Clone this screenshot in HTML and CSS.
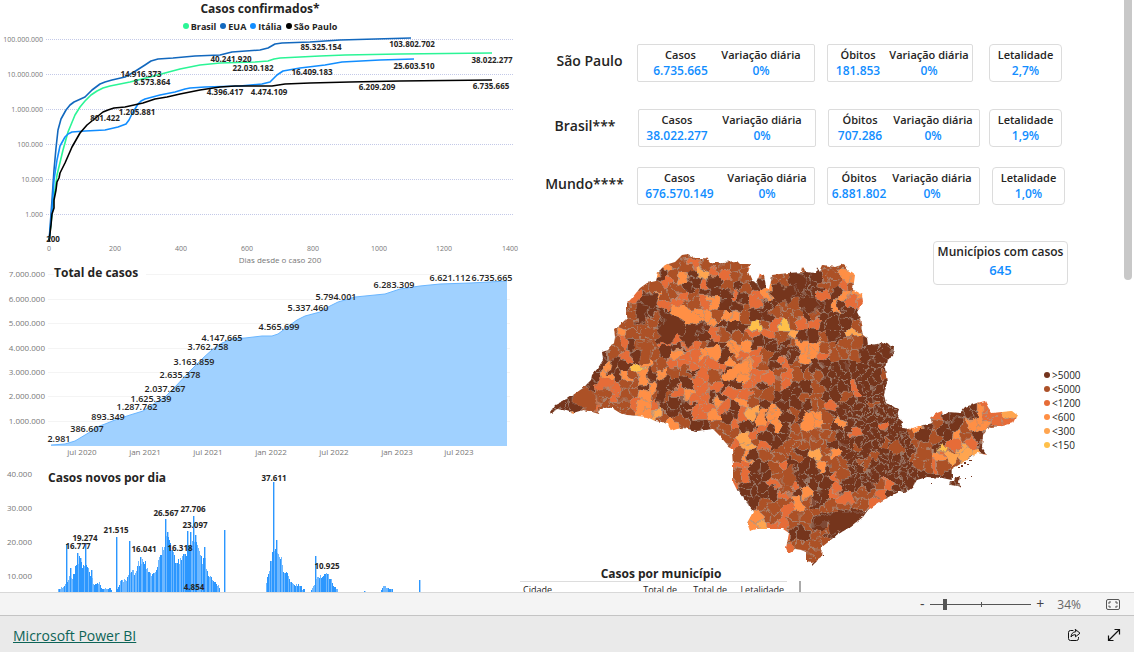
FILE: index.html
```html
<!DOCTYPE html>
<html lang="pt-BR">
<head>
<meta charset="utf-8">
<title>Casos confirmados</title>
<link rel="stylesheet" href="styles.css">
</head>
<body>
<main class="report">
  <div class="charts">
    <section class="panel">
      <h2 class="panel-title">Casos confirmados*</h2>
      <ul class="series-legend">
        <li><span class="dot dot-brasil"></span>Brasil</li>
        <li><span class="dot dot-eua"></span>EUA</li>
        <li><span class="dot dot-italia"></span>Itália</li>
        <li><span class="dot dot-sp"></span>São Paulo</li>
      </ul>
      <svg class="chart" viewBox="0 34 520 232" role="img" aria-label="Casos confirmados por dias desde o caso 200">
        <path class="grid-dotted" d="M46 39.5H513M46 74.5H513M46 109.5H513M46 144.5H513M46 179.5H513M46 214.5H513"/>
        <g class="axis axis-small end">
          <text x="43" y="42">100.000.000</text><text x="43" y="77">10.000.000</text><text x="43" y="112">1.000.000</text>
          <text x="43" y="147">100.000</text><text x="43" y="182">10.000</text><text x="43" y="217">1.000</text>
        </g>
        <g class="axis axis-small mid">
          <text x="49" y="251">0</text><text x="115" y="251">200</text><text x="181" y="251">400</text><text x="247" y="251">600</text>
          <text x="313" y="251">800</text><text x="379" y="251">1000</text><text x="444" y="251">1200</text><text x="510" y="251">1400</text>
        </g>
        <text class="axis mid" x="280" y="263">Dias desde o caso 200</text>
        <polyline class="line line-brasil" points="49,242 53,205 57,175 63,150 68,132 75,115 80,107 85,101 91,95 97,91 103,88 110,86 130,82 150,77 165,73 180,69 200,65 220,63 255,62 268,61 274,59 280,58 300,57 320,56 345,55 400,54 492,53"/>
        <polyline class="line line-eua" points="49,242 52,200 54,170 56,148 58,130 61,119 66,110 70,105 74,102 85,97 92,90 96,87 100,84 105,82 112,80 125,77 134,72 145,65 151,61 158,59 173,58 195,56 220,55 232,52 260,50 268,48 275,44 282,43 310,42 340,40 411,38"/>
        <polyline class="line line-italia" points="49,242 52,210 54,180 57,160 60,146 65,137 68,134 72,132 85,131 105,130 118,127 126,124 129,120 132,114 138,104 141,101 145,99 160,95 175,92 185,89 190,88 205,87 240,86 262,84 270,82 274,78 277,75 283,71 300,68 325,65 342,62 380,60 414,59"/>
        <polyline class="line line-sp" points="49,242 51,225 52,214 54,208 54,200 56,190 57,182 59,178 60,173 65,163 72,147 80,133 87,125 98,116 103,112 108,110 114,108 125,107 143,103 155,99 167,97 180,94 200,90 220,87 235,86 272,86 285,84 310,83 350,82 400,81 492,80"/>
        <g class="value value-small mid">
          <text x="53" y="242">200</text><text x="105" y="121">801.422</text><text x="137" y="115">1.205.881</text>
          <text x="141" y="77">14.916.373</text><text x="152" y="85">8.573.864</text><text x="231" y="62">40.241.920</text>
          <text x="253" y="71">22.030.182</text><text x="225" y="95">4.396.417</text><text x="269" y="95">4.474.109</text>
          <text x="321" y="50">85.325.154</text><text x="312" y="75">16.409.183</text><text x="412" y="47">103.802.702</text>
          <text x="414" y="69">25.603.510</text><text x="377" y="90">6.209.209</text><text x="492" y="63">38.022.277</text>
          <text x="491" y="89">6.735.665</text>
        </g>
      </svg>
    </section>

    <section class="panel">
      <h2 class="panel-title over-total">Total de casos</h2>
      <svg class="chart" viewBox="0 266 520 196" role="img" aria-label="Total de casos acumulados">
        <path class="grid-faint" d="M48 274.5H510M48 299.5H510M48 323.5H510M48 348.5H510M48 372.5H510M48 396.5H510M48 421.5H510"/>
        <path class="area" d="M51 445L65 444L75 441L90 432L97 427L105 424L115 420L130 415L143 411L155 403L165 397L175 387L190 371L203 358L213 349L222 343L232 339L245 338L262 336L272 336L278 334L290 325L297 320L305 316L320 312L330 306L338 302L345 300L355 297L385 294L400 289L420 286L440 284L470 283L507 281V446H51Z"/>
        <polyline class="area-line" points="51,445 65,444 75,441 90,432 97,427 105,424 115,420 130,415 143,411 155,403 165,397 175,387 190,371 203,358 213,349 222,343 232,339 245,338 262,336 272,336 278,334 290,325 297,320 305,316 320,312 330,306 338,302 345,300 355,297 385,294 400,289 420,286 440,284 470,283 507,281"/>
        <g class="axis end">
          <text x="45" y="277">7.000.000</text><text x="45" y="302">6.000.000</text><text x="45" y="326">5.000.000</text><text x="45" y="351">4.000.000</text>
          <text x="45" y="375">3.000.000</text><text x="45" y="399">2.000.000</text><text x="45" y="424">1.000.000</text>
        </g>
        <g class="axis mid">
          <text x="82" y="455">jul 2020</text><text x="145" y="455">jan 2021</text><text x="208" y="455">jul 2021</text><text x="271" y="455">jan 2022</text>
          <text x="334" y="455">jul 2022</text><text x="397" y="455">jan 2023</text><text x="459" y="455">jul 2023</text>
        </g>
        <g class="value value-total mid">
          <text x="59" y="442">2.981</text><text x="87" y="432">386.607</text><text x="108" y="420">893.349</text><text x="137" y="410">1.287.762</text>
          <text x="151" y="402">1.625.339</text><text x="165" y="392">2.037.267</text><text x="180" y="378">2.635.378</text><text x="194" y="365">3.163.859</text>
          <text x="208" y="350">3.762.758</text><text x="222" y="341">4.147.665</text><text x="279" y="330">4.565.699</text><text x="308" y="311">5.337.460</text>
          <text x="336" y="300">5.794.001</text><text x="394" y="288">6.283.309</text><text x="450" y="281">6.621.112</text><text x="492" y="281">6.735.665</text>
        </g>
      </svg>
    </section>

    <section class="panel">
      <h2 class="panel-title over-new">Casos novos por dia</h2>
      <svg class="chart" viewBox="0 462 520 150" role="img" aria-label="Casos novos por dia">
        <g class="axis end">
          <text x="32" y="477">40.000</text><text x="32" y="511">30.000</text><text x="32" y="545">20.000</text><text x="32" y="579">10.000</text>
        </g>
        <path id="bars-soft" class="bars-soft"/>
        <path id="bars" class="bars"/>
        <g class="value value-small mid">
          <text x="78" y="549">16.777</text><text x="85" y="541">19.274</text><text x="116" y="533">21.515</text><text x="144" y="552">16.041</text>
          <text x="166" y="516">26.567</text><text x="193" y="512">27.706</text><text x="195" y="528">23.097</text><text x="180" y="551">16.318</text>
          <text x="194" y="590">4.854</text><text x="274" y="481">37.611</text><text x="327" y="569">10.925</text>
        </g>
      </svg>
    </section>
  </div>

  <div class="summary">
    <section class="kpis">
      <div class="kpi-row row-sp">
        <h2 class="kpi-place">São Paulo</h2>
        <dl class="kpi-box">
          <div><dt>Casos</dt><dd>6.735.665</dd></div>
          <div><dt>Variação diária</dt><dd>0%</dd></div>
        </dl>
        <dl class="kpi-box kpi-deaths">
          <div><dt>Óbitos</dt><dd>181.853</dd></div>
          <div><dt>Variação diária</dt><dd>0%</dd></div>
        </dl>
        <dl class="kpi-box kpi-single"><div><dt>Letalidade</dt><dd>2,7%</dd></div></dl>
      </div>
      <div class="kpi-row row-brasil">
        <h2 class="kpi-place">Brasil***</h2>
        <dl class="kpi-box">
          <div><dt>Casos</dt><dd>38.022.277</dd></div>
          <div><dt>Variação diária</dt><dd>0%</dd></div>
        </dl>
        <dl class="kpi-box kpi-deaths">
          <div><dt>Óbitos</dt><dd>707.286</dd></div>
          <div><dt>Variação diária</dt><dd>0%</dd></div>
        </dl>
        <dl class="kpi-box kpi-single"><div><dt>Letalidade</dt><dd>1,9%</dd></div></dl>
      </div>
      <div class="kpi-row row-mundo">
        <h2 class="kpi-place">Mundo****</h2>
        <dl class="kpi-box">
          <div><dt>Casos</dt><dd>676.570.149</dd></div>
          <div><dt>Variação diária</dt><dd>0%</dd></div>
        </dl>
        <dl class="kpi-box kpi-deaths">
          <div><dt>Óbitos</dt><dd>6.881.802</dd></div>
          <div><dt>Variação diária</dt><dd>0%</dd></div>
        </dl>
        <dl class="kpi-box kpi-single"><div><dt>Letalidade</dt><dd>1,0%</dd></div></dl>
      </div>
    </section>

    <section class="map-area">
      <svg class="map" viewBox="520 205 520 361" role="img" aria-label="Mapa de casos por município do estado de São Paulo">
        <defs>
          <clipPath id="state">
            <path d="M550 412L555 405L563 401L573 395L583 388L591 380L592 375L598 368L603 360L602 352L608 350L614 343L615 337L614 329L620 325L627 318L627 303L632 298L640 288L647 283L656 281L658 272L665 265L675 262L682 255L688 254L695 258L707 258L710 262L723 262L737 261L740 264L751 264L748 272L752 281L757 282L760 273L764 275L766 288L769 289L772 275L788 273L802 272L803 267L806 272L816 273L817 267L820 272L823 265L835 267L844 264L848 270L855 275L853 290L862 295L863 303L857 312L860 318L863 335L867 338L868 345L877 344L882 342L888 344L894 347L893 357L887 360L885 368L887 383L884 395L886 403L899 409L897 417L903 422L902 428L913 429L924 425L933 423L931 417L937 413L942 411L943 415L948 412L960 413L965 407L977 403L985 401L988 407L992 413L1002 412L1012 411L1017 415L1013 423L1003 426L990 427L983 435L982 447L987 455L977 453L970 458L962 463L952 469L952 480L942 478L927 477L917 480L912 488L905 493L900 491L892 495L880 502L868 510L863 517L850 527L837 535L822 547L821 557L812 563L807 562L807 552L802 550L795 549L788 553L786 548L789 533L783 529L770 529L757 529L750 531L747 523L753 512L747 503L737 490L733 482L733 467L732 450L725 442L720 436L713 429L697 431L683 428L677 429L671 431L668 423L655 421L647 417L637 416L627 415L620 413L612 408L600 408L599 414L592 412L583 410L573 413L563 410L557 409L551 414Z"/>
            <path d="M955 476L960 477L959 481L961 488L957 486L949 485L950 482L954 482Z"/>
          </clipPath>
          <filter id="organic" x="0" y="0" width="1" height="1">
            <feTurbulence type="fractalNoise" baseFrequency="0.09" numOctaves="2" seed="4"/>
            <feDisplacementMap in="SourceGraphic" scale="13" xChannelSelector="R" yChannelSelector="G"/>
          </filter>
          <filter id="coast" x="0" y="0" width="1" height="1">
            <feTurbulence type="fractalNoise" baseFrequency="0.2" numOctaves="1" seed="9"/>
            <feDisplacementMap in="SourceGraphic" scale="4" xChannelSelector="R" yChannelSelector="G"/>
          </filter>
        </defs>
        <g filter="url(#coast)">
          <g clip-path="url(#state)">
            <g id="cells" class="cells" filter="url(#organic)"></g>
          </g>
        </g>
        <path class="islets" d="M964 462h2v2h-2zM967 464h2v1h-2zM969 460h3v1h-3zM965 478h1v1h-1zM971 476h1v1h-1zM931 483h1v1h-1zM958 467h2v1h-2zM961 465h2v2h-2zM823 555h1v1h-1zM812 564l4 -3v1l-4 4z"/>
      </svg>
      <ul class="map-legend">
        <li><span class="dot dot-c5"></span>&gt;5000</li>
        <li><span class="dot dot-c4"></span>&lt;5000</li>
        <li><span class="dot dot-c3"></span>&lt;1200</li>
        <li><span class="dot dot-c2"></span>&lt;600</li>
        <li><span class="dot dot-c1"></span>&lt;300</li>
        <li><span class="dot dot-c0"></span>&lt;150</li>
      </ul>
      <dl class="city-count"><dt>Municípios com casos</dt><dd>645</dd></dl>
    </section>

    <section class="city-table">
      <h2 class="panel-title city-title">Casos por município</h2>
      <div class="table-wrap">
        <table>
          <thead><tr><th class="col-city">Cidade</th><th class="col-total">Total de</th><th class="col-total">Total de</th><th>Letalidade</th></tr></thead>
        </table>
        <span class="table-thumb"></span>
      </div>
    </section>
  </div>
  <div class="scroll-track"><span class="scroll-thumb"></span></div>
</main>

<div class="zoom-bar">
  <button class="zoom-step" type="button" aria-label="Diminuir zoom">-</button>
  <input class="zoom-range" type="range" min="0" max="100" value="13" aria-label="Zoom">
  <button class="zoom-step" type="button" aria-label="Aumentar zoom">+</button>
  <span class="zoom-value">34%</span>
  <button class="icon-button" type="button" aria-label="Ajustar à página">
    <svg width="14" height="11" viewBox="0 0 14 11" fill="none" stroke="#555"><rect x=".5" y=".5" width="13" height="10" rx="1.5"/><path d="M3 5V3h2M9 3h2v2M11 6.500v1.500H9M5 8H3V6.500"/></svg>
  </button>
</div>

<footer class="footer">
  <a class="brand" href="#">Microsoft Power BI</a>
  <button class="icon-button" type="button" aria-label="Compartilhar">
    <svg width="14" height="14" viewBox="0 0 14 14" fill="none" stroke="#111" stroke-linejoin="round" stroke-linecap="round"><path d="M6 2.500H3.500a2 2 0 0 0-2 2v6a2 2 0 0 0 2 2h6a2 2 0 0 0 2-2V9.500"/><path d="M8.500 1.500L13 5.200L8.500 8.800V6.700C6.500 6.700 5.200 7.300 4 9C4.300 6 5.500 4 8.500 3.700Z"/></svg>
  </button>
  <button class="icon-button" type="button" aria-label="Tela inteira">
    <svg width="14" height="14" viewBox="0 0 14 14" fill="none" stroke="#111" stroke-width="1.200"><path d="M1.500 12.500L12.500 1.500M7.500 1.500h5v5M1.500 7.500v5h5"/></svg>
  </button>
</footer>
<script src="charts.js"></script>
</body>
</html>
```
FILE: styles.css
```css
* { box-sizing: border-box; }

body {
  margin: 0;
  height: 100vh;
  display: flex;
  flex-direction: column;
  background: #fff;
  color: #252423;
  font-family: "Open Sans", "Noto Sans", sans-serif;
}

h2, dl, dd, ul { margin: 0; padding: 0; }
ul { list-style: none; }

button {
  padding: 0;
  border: 0;
  background: none;
  color: inherit;
  font: inherit;
}

.report {
  flex: 1;
  min-height: 0;
  overflow: hidden;
  display: grid;
  grid-template-columns: 520fr 604fr 10px;
  align-items: start;
}

.panel { position: relative; }

.panel-title {
  font-size: 12px;
  line-height: 18px;
  font-weight: 700;
  text-align: center;
}

.over-total, .over-new {
  position: absolute;
  background: #fff;
}

.over-total { left: 54px; top: -2px; padding-right: 8px; }
.over-new { left: 48px; top: 7px; }

.series-legend {
  display: flex;
  justify-content: center;
  gap: 4px;
  height: 16px;
  font-size: 9px;
  line-height: 17px;
  font-weight: 700;
}

.series-legend li, .map-legend li { display: flex; align-items: center; gap: 2px; }

.dot { width: 6px; height: 6px; border-radius: 50%; }
.dot-brasil { background: #2bf596; }
.dot-eua { background: #1268be; }
.dot-italia { background: #118dff; }
.dot-sp { background: #000; }
.dot-c5 { background: #74341d; }
.dot-c4 { background: #ac5128; }
.dot-c3 { background: #e66c37; }
.dot-c2 { background: #ff8f44; }
.dot-c1 { background: #ffa550; }
.dot-c0 { background: #ffc04a; }

.chart { display: block; width: 100%; }

.axis { font-size: 8px; fill: #777; }
.axis-small { font-size: 7px; }
.end { text-anchor: end; }
.mid { text-anchor: middle; }

.value { fill: #252423; font-weight: 600; }
.value-small { font-size: 8px; font-weight: 700; }
.value-total { font-size: 9px; }

.grid-dotted { stroke: #c3c9e8; stroke-dasharray: 1 1; fill: none; }
.grid-faint { stroke: #f4f4f4; fill: none; }

.line { fill: none; stroke-width: 1.6; stroke-linejoin: round; }
.line-brasil { stroke: #2bf596; }
.line-eua { stroke: #1268be; }
.line-italia { stroke: #118dff; }
.line-sp { stroke: #000; }

.area { fill: #a0d1ff; }
.area-line { fill: none; stroke: #6ab6ff; }
.bars { fill: #2c97ff; }
.bars-soft { fill: #6fb8ff; }

.kpis { padding-top: 44px; }

.kpi-row { display: grid; height: 38px; }
.row-sp { grid-template-columns: 117px 178px 12px 146px 16px 73px; margin-bottom: 27px; }
.row-brasil { grid-template-columns: 118px 178px 12px 152px 9px 73px; margin-bottom: 20px; }
.row-mundo { grid-template-columns: 117px 178px 12px 153px 12px 73px; }

.kpi-deaths { grid-column: 4; }
.kpi-single { grid-column: 6; }

.kpi-place {
  padding: 7px 0 0 12px;
  font-size: 14px;
  line-height: 20px;
  font-weight: 600;
  text-align: center;
}

.row-sp .kpi-place { padding-left: 22px; }

.kpi-box {
  display: grid;
  grid-template-columns: 85px 76px;
  align-content: center;
  border: 1px solid #dcdcdc;
  border-radius: 2px;
  text-align: center;
  white-space: nowrap;
}

.row-brasil .kpi-box { grid-template-columns: 76px 94px; }
.row-mundo .kpi-box { grid-template-columns: 83px 92px; }
.kpi-row .kpi-deaths { grid-template-columns: 62px 84px; }
.row-sp .kpi-deaths { grid-template-columns: 60px 82px; }
.kpi-row .kpi-single { grid-template-columns: 1fr; border-radius: 4px; }

dt { font-size: 11px; line-height: 16px; font-weight: 600; }
dd { font-size: 12px; line-height: 16px; font-weight: 600; color: #118dff; }
.kpi-box > div { display: flex; flex-direction: column; align-items: center; }

.map-area { position: relative; display: flex; }
.map { display: block; flex: 1; min-width: 0; }
.cells { stroke: #a08b7d; stroke-width: 0.5; }
.islets { fill: #74341d; }

.map-legend {
  width: 84px;
  padding: 163px 0 0 4px;
  font-size: 10px;
  line-height: 14px;
}

.city-count {
  position: absolute;
  top: 36px;
  right: 56px;
  width: 135px;
  padding: 0 0 5px;
  border: 1px solid #dcdcdc;
  border-radius: 4px;
  text-align: center;
}

.city-count dt { font-size: 12px; line-height: 19px; white-space: nowrap; }
.city-count dd { font-size: 13px; line-height: 18px; }

.city-title { width: 282px; line-height: 15px; }

.table-wrap { display: flex; gap: 12px; }

table {
  width: 267px;
  border-collapse: collapse;
  border-top: 1px solid #ddd;
  table-layout: fixed;
}

th {
  padding: 1px 3px 0 0;
  font-size: 9px;
  line-height: 13px;
  font-weight: 400;
  text-align: right;
  white-space: nowrap;
}

.col-city { width: 110px; padding-left: 3px; text-align: left; }
.col-total { width: 50px; }
.table-thumb { width: 2px; background: #aaa; }

.scroll-track { height: 100%; }
.scroll-thumb {
  display: block;
  width: 8px;
  height: 280px;
  border-radius: 0 0 4px 4px;
  background: #c8c8c8;
}

.zoom-bar {
  display: flex;
  align-items: center;
  justify-content: flex-end;
  height: 23px;
  padding-right: 14px;
  border-top: 1px solid #d8d8d8;
  background: #f4f4f4;
  color: #444;
}

.zoom-step { width: 10px; font-size: 14px; line-height: 16px; }
.zoom-value { margin: 0 25px 0 12px; font-size: 12px; color: #666; }

.zoom-range {
  appearance: none;
  width: 101px;
  height: 12px;
  margin: 0 4px 0 3px;
  background:
    linear-gradient(#555, #555) 51px center / 1px 5px no-repeat,
    linear-gradient(#555, #555) center / 100% 1px no-repeat;
}

.zoom-range::-webkit-slider-thumb {
  appearance: none;
  width: 4px;
  height: 11px;
  background: #555;
}

.icon-button { display: flex; }

.footer {
  display: flex;
  align-items: center;
  gap: 26px;
  height: 37px;
  padding: 2px 13px 0;
  border-top: 1px solid #c4c4c4;
  background: #eaeaea;
}

.brand { margin-right: auto; font-size: 14px; color: #0d6457; }
```
FILE: charts.js
```javascript
let state = 7;
function rnd() {
  state = (state * 16807) % 2147483647;
  return state / 2147483647;
}

/* Daily cases: top edge of the bars along x, then isolated peaks. */
const runs = [
  [[58, 589], [62, 586], [66, 582], [68, 576], [72, 575], [76, 562], [79, 556], [83, 562], [85, 560], [89, 568], [92, 575], [93, 582], [99, 582], [101, 588], [110, 588], [112, 590]],
  [[117, 588], [120, 580], [126, 579], [130, 568], [134, 570], [137, 560], [143, 556], [147, 563], [151, 572], [155, 568], [158, 558], [161, 550], [164, 540], [166, 530], [168, 537], [172, 548], [177, 560], [181, 556], [185, 550], [188, 545], [192, 538], [195, 536], [199, 545], [202, 556], [205, 552], [207, 570], [211, 574], [215, 581], [220, 587]],
  [[266, 582], [268, 572], [271, 553], [274, 545], [276, 541], [278, 549], [281, 557], [283, 570], [286, 566], [290, 578], [295, 584], [300, 583], [302, 589], [305, 588]],
  [[311, 590], [314, 583], [317, 573], [321, 575], [326, 572], [331, 577], [334, 586], [338, 590]],
  [[381, 589], [384, 584], [387, 587], [393, 588]]
];
const peaks = [[66, 544], [70, 568], [77, 553], [80, 558], [85, 543], [91, 570], [116, 537], [129, 541], [140, 557], [165, 519], [167, 532], [187, 531], [190, 532], [193, 516], [195, 535], [204, 547], [224, 530], [273, 482], [276, 540], [315, 556], [364, 591], [419, 580]];

let hard = "", soft = "";
for (const run of runs) {
  for (let i = 0; i + 1 < run.length; i++) {
    const [x0, y0] = run[i], [x1, y1] = run[i + 1];
    for (let x = x0; x < x1; x++) {
      const y = y0 + (y1 - y0) * (x - x0) / (x1 - x0);
      const top = Math.round(y + rnd() * Math.min(8, (594 - y) / 4));
      const bar = `M${x} ${top}h1V612h-1z`;
      if (rnd() < 0.5) hard += bar; else soft += bar;
    }
  }
}
for (const [x, y] of peaks) {
  hard += `M${x} ${y}h1V612h-1z`;
  soft += `M${x + 1} ${y}h0.6V612h-0.6z`;
}
document.getElementById("bars").setAttribute("d", hard);
document.getElementById("bars-soft").setAttribute("d", soft);

/* Case class of the municipalities, one character for each 10 units. */
const classes = [
  "...........44443444............................",
  "..........42443444444......44433...............",
  "..........25425133443444455442222..............",
  ".........44345535454554455544344...............",
  "........352443455535322555535225...............",
  "........4553344325543554435525332..............",
  ".......445455222422455444545555444.............",
  ".......44445522525550430433555442..............",
  "......42444535553444334415545514425............",
  "......43544353345522555542244445555444.........",
  ".....5435445233225433455522344455554444........",
  ".....52502443333332234534555555555544..........",
  "....5252425244534522334344455555545544.........",
  "...55334452455333553354355455535555544.........",
  "...5443442443233553344555445543555555..........",
  "5554344432355533235245255544355545555.....53...",
  "552444344214553325531525452455555552.43555533.1",
  "5524443442412455443553254524525553552545542233.",
  ".................4413555444445355555454524544..",
  ".................43143544444554554454455313544.",
  "..................42544445142555455544234113555",
  "..................335543555244545555443441555..",
  "..................43554455553455555555555555...",
  "..................3555343555355543555555555....",
  "..................555553525533444355555555.....",
  "...................55444245444443345...........",
  "....................2443444545555..............",
  "...................421334454455................",
  "......................43554455.................",
  "......................334444...................",
  "......................33444....................",
  "........................44....................."
];
const palette = ["#ffc04a", "#ffa550", "#ff8f44", "#e66c37", "#ac5128", "#74341d"];

const sites = [];
classes.forEach((row, r) => {
  for (let c = 0; c < row.length; c++) {
    if (row[c] === ".") continue;
    const x = 555 + 10 * c, y = 255 + 10 * r;
    const dense = x > 835 && x < 925 && y > 375 && y < 490 && row[c] === "5";
    for (let n = dense ? 2 : 1; n > 0; n--) {
      const spread = dense ? 12 : 8;
      sites.push({ x: x + (rnd() - 0.5) * spread, y: y + (rnd() - 0.5) * spread, k: +row[c] });
    }
  }
});

/* Voronoi cell of a site: a square cut by the bisectors to its neighbours. */
function cell(s) {
  let poly = [[s.x - 22, s.y - 22], [s.x + 22, s.y - 22], [s.x + 22, s.y + 22], [s.x - 22, s.y + 22]];
  for (const t of sites) {
    const dx = t.x - s.x, dy = t.y - s.y;
    if (t === s || dx * dx + dy * dy > 3600) continue;
    const mx = (s.x + t.x) / 2, my = (s.y + t.y) / 2;
    const side = p => (p[0] - mx) * dx + (p[1] - my) * dy;
    const out = [];
    poly.forEach((p, i) => {
      const q = poly[(i + 1) % poly.length], a = side(p), b = side(q);
      if (a <= 0) out.push(p);
      if (a * b < 0) {
        const f = a / (a - b);
        out.push([p[0] + (q[0] - p[0]) * f, p[1] + (q[1] - p[1]) * f]);
      }
    });
    poly = out;
  }
  return poly;
}

const group = document.getElementById("cells");
function addCell(points, k) {
  const el = document.createElementNS("http://www.w3.org/2000/svg", "polygon");
  el.setAttribute("points", points);
  el.setAttribute("fill", palette[k]);
  group.appendChild(el);
}
for (const s of sites) {
  addCell(cell(s).map(p => p.map(v => v.toFixed(1)).join(",")).join(" "), s.k);
}

/* Large municipalities that span several cells. */
const large = [
  ["668,305 690,309 703,322 686,324 668,312", 2],
  ["644,293 660,293 655,308 637,303", 5],
  ["637,303 650,305 645,322 635,324", 5],
  ["657,308 668,312 687,324 680,336 673,337 665,343 655,340 665,320", 5],
  ["687,324 706,322 695,340 687,350 680,336", 5],
  ["720,378 742,362 750,358 747,373 725,383", 2],
  ["727,342 732,344 740,353 736,355", 2],
  ["660,375 672,377 663,403 655,400", 5],
  ["641,341 650,343 648,365 641,360", 4],
  ["613,355 622,356 615,376 609,374", 5],
  ["594,388 600,377 613,380 612,388 600,392", 3],
  ["575,392 592,388 598,400 590,412 575,405", 4],
  ["755,430 757,413 768,407 765,427", 2],
  ["803,413 812,413 815,422 807,433 802,432", 2],
  ["770,288 785,285 795,290 792,302 775,303", 5],
  ["788,273 803,274 806,286 800,291 789,284", 5],
  ["798,297 805,291 818,300 815,315 803,310", 5],
  ["780,470 793,465 797,480 783,488", 4],
  ["830,513 867,513 853,527 830,537 828,523 812,523", 5],
  ["945,453 960,452 960,460 952,466 945,462", 1],
  ["940,445 950,448 947,453 941,452", 0],
  ["977,403 982,405 983,425 977,426", 2]
];
for (const [points, k] of large) addCell(points, k);
```
